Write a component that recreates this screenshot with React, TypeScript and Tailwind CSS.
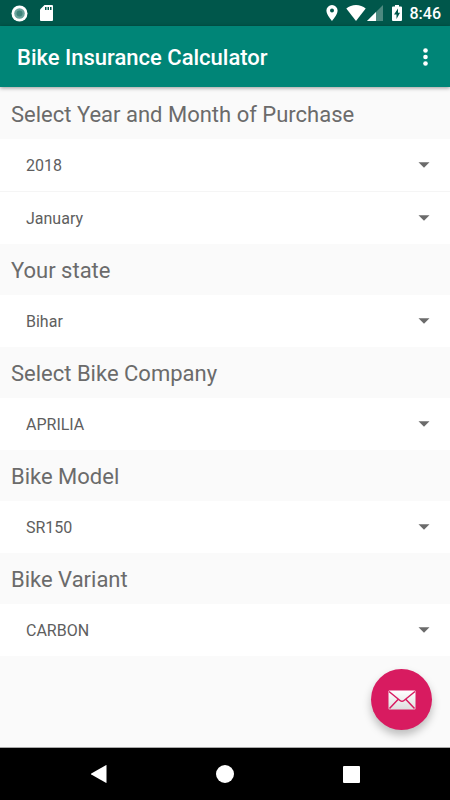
import { useId } from "react";

type FieldProps = { label: string; options: string[]; divided?: boolean };

function Dropdown({ id, label, options, divided }: FieldProps & { id: string }) {
  return (
    <div className={divided ? "grid items-center border-t border-[#f5f5f5] bg-white" : "grid items-center bg-white"}>
      <select
        id={id}
        aria-label={label}
        className="col-start-1 row-start-1 h-[52px] w-full appearance-none bg-transparent pt-0.5 pr-12 pl-[26px] text-base text-[#5e5e5e] outline-none"
      >
        {options.map((option) => (
          <option key={option}>{option}</option>
        ))}
      </select>
      <svg
        viewBox="0 0 12 6"
        className="pointer-events-none col-start-1 row-start-1 mr-5 h-1.5 w-3 justify-self-end"
        fill="#6b6b6b"
        aria-hidden="true"
      >
        <path d="M0.5 0.3h11L6 5.8z" />
      </svg>
    </div>
  );
}

function Section({ title, fields }: { title: string; fields: FieldProps[] }) {
  const id = useId();
  return (
    <section>
      <label htmlFor={`${id}-0`} className="flex h-[51px] items-center px-[11px] pt-0.5 text-[22px] text-[#6b6b6b]">
        {title}
      </label>
      {fields.map((field, index) => (
        <Dropdown key={field.label} {...field} id={`${id}-${index}`} divided={index > 0} />
      ))}
    </section>
  );
}

function StatusBar() {
  return (
    <div className="flex h-[26px] items-center justify-between bg-[#00574b] pr-[9px] pl-[11px] text-white">
      <div className="flex items-center gap-3">
        <svg viewBox="0 0 17 17" className="size-[17px]" aria-hidden="true">
          <circle cx="8.5" cy="8.5" r="8" fill="#ffffff" />
          <circle cx="8.5" cy="8.5" r="5.3" fill="#6ba39c" />
          <circle cx="8.5" cy="8.5" r="3" fill="#3f837a" />
        </svg>
        <svg viewBox="0 0 13 16" className="h-4 w-[13px]" aria-hidden="true">
          <path d="M4.5 0H12a1 1 0 0 1 1 1v14a1 1 0 0 1-1 1H1a1 1 0 0 1-1-1V4.5z" fill="#ffffff" />
          <path d="M5 2h1.5v3H5zM7.5 2H9v3H7.5zM10 2h1.5v3H10z" fill="#00574b" />
        </svg>
      </div>
      <div className="flex items-center">
        <svg viewBox="0 0 12 16" className="h-4 w-3" aria-hidden="true">
          <path
            fill="#ffffff"
            fillRule="evenodd"
            d="M6 0a5.6 5.6 0 0 0-5.6 5.6C.4 9.8 6 16 6 16s5.6-6.2 5.6-10.4A5.6 5.6 0 0 0 6 0zm0 3.6a2 2 0 1 1 0 4 2 2 0 0 1 0-4z"
          />
        </svg>
        <svg viewBox="0 0 20 16" className="ml-2 h-4 w-5" aria-hidden="true">
          <path d="M10 16 0.3 3.5C3 1.2 6.3 0 10 0s7 1.2 9.7 3.5z" fill="#ffffff" />
        </svg>
        <svg viewBox="0 0 16 16" className="ml-px h-4 w-4" aria-hidden="true">
          <path d="M16 0v16H0z" fill="#4d897f" />
          <path d="M9 7v9H0z" fill="#ffffff" />
        </svg>
        <svg viewBox="0 0 10 16" className="ml-[9px] h-4 w-2.5" aria-hidden="true">
          <path d="M3 0h4v1.5h2a1 1 0 0 1 1 1V15a1 1 0 0 1-1 1H1a1 1 0 0 1-1-1V2.5a1 1 0 0 1 1-1h2z" fill="#ffffff" />
          <path d="M6 3.5 2 9.500h2.500V14L8 7.800H6z" fill="#00574b" />
        </svg>
        <time className="ml-2 pt-0.5 text-base/6 font-medium">8:46</time>
      </div>
    </div>
  );
}

const months = [
  "January", "February", "March", "April", "May", "June",
  "July", "August", "September", "October", "November", "December",
];

export default function App() {
  return (
    <div className="flex min-h-screen flex-col bg-[#fafafa] font-['Roboto',sans-serif]">
      <StatusBar />
      <header className="relative flex h-[61px] items-center justify-between bg-[#008577] pr-[19px] pl-[17px] text-white shadow-[0_1px_4px_rgba(0,0,0,0.4)]">
        <h1 className="pt-0.5 text-[22px] font-medium">Bike Insurance Calculator</h1>
        <button type="button" aria-label="More options" className="flex h-10 w-3 items-center justify-center">
          <svg viewBox="0 0 5 18" className="h-[18px] w-[5px]" fill="#ffffff" aria-hidden="true">
            <circle cx="2.5" cy="2.5" r="2.3" />
            <circle cx="2.5" cy="9" r="2.3" />
            <circle cx="2.5" cy="15.5" r="2.3" />
          </svg>
        </button>
      </header>

      <main className="relative flex-1 pt-px pb-20">
        <Section
          title="Select Year and Month of Purchase"
          fields={[
            { label: "Year of purchase", options: ["2018", "2017", "2016", "2015"] },
            { label: "Month of purchase", options: months },
          ]}
        />
        <Section title="Your state" fields={[{ label: "Your state", options: ["Bihar"] }]} />
        <Section title="Select Bike Company" fields={[{ label: "Bike company", options: ["APRILIA"] }]} />
        <Section title="Bike Model" fields={[{ label: "Bike model", options: ["SR150"] }]} />
        <Section title="Bike Variant" fields={[{ label: "Bike variant", options: ["CARBON"] }]} />

        <button
          type="button"
          aria-label="Send email"
          className="absolute right-[18px] bottom-[17px] flex size-[61px] items-center justify-center rounded-full bg-[#d81b60] shadow-[0_5px_9px_rgba(0,0,0,0.25)]"
        >
          <svg viewBox="0 0 28 20" className="h-5 w-7" aria-hidden="true">
            <defs>
              <linearGradient id="paper" x1="0" y1="0" x2="0" y2="1">
                <stop offset="0" stopColor="#ffffff" />
                <stop offset="1" stopColor="#dedede" />
              </linearGradient>
            </defs>
            <rect x="0.5" y="0.5" width="27" height="19" rx="1" fill="url(#paper)" />
            <path
              d="M1 1.5 12 10.5q2 1.6 4 0L27 1.5M1.5 18.5l8.5-9M26.5 18.5l-8.5-9"
              fill="none"
              stroke="#d81b60"
              strokeWidth="1.5"
            />
          </svg>
        </button>
      </main>

      <nav className="flex h-[53px] items-center justify-around border-t border-[#a8a8a8] bg-black px-[35px]">
        <button type="button" aria-label="Back" className="flex size-10 items-center justify-center">
          <svg viewBox="0 0 18 18" className="size-[18px]" fill="#ffffff" aria-hidden="true">
            <path d="M17.500 0.500v17q0 .7-.7.3L2.300 9.500q-.6-.5 0-1L16.800.2q.7-.4.7.3z" />
          </svg>
        </button>
        <button type="button" aria-label="Home" className="flex size-10 items-center justify-center">
          <span className="size-[18px] rounded-full bg-white" />
        </button>
        <button type="button" aria-label="Recent apps" className="flex size-10 items-center justify-center">
          <span className="size-[17px] rounded-[1px] bg-white" />
        </button>
      </nav>
    </div>
  );
}
